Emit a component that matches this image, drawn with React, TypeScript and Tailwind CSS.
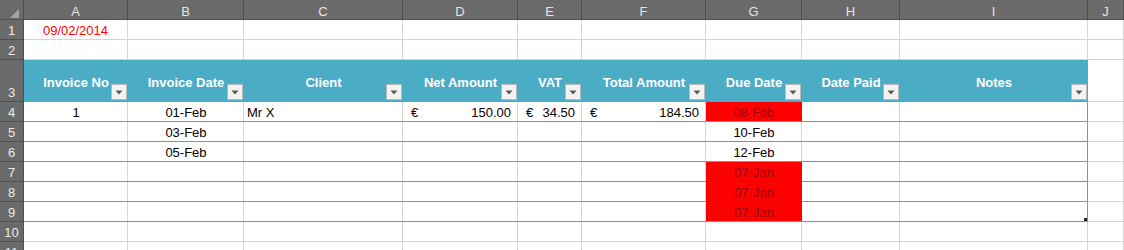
import React from "react";

const letters = ["A", "B", "C", "D", "E", "F", "G", "H", "I", "J"];

const headers = [
  "Invoice No",
  "Invoice Date",
  "Client",
  "Net Amount",
  "VAT",
  "Total Amount",
  "Due Date",
  "Date Paid",
  "Notes",
];

type Body = {
  a?: string;
  b?: string;
  c?: string;
  d?: string;
  e?: string;
  f?: string;
  g?: string;
  red?: boolean;
  redNext?: boolean;
};

const body: Body[] = [
  { a: "1", b: "01-Feb", c: "Mr X", d: "150.00", e: "34.50", f: "184.50", g: "08-Feb", red: true },
  { b: "03-Feb", g: "10-Feb" },
  { b: "05-Feb", g: "12-Feb" },
  { g: "07-Jan", red: true, redNext: true },
  { g: "07-Jan", red: true, redNext: true },
  { g: "07-Jan", red: true },
];

function RowHead({ n }: { n: number | string }) {
  return (
    <div className="flex items-end justify-center bg-[#6a6a6a] border-r border-b border-[#4f4f4f] text-[#ececec] text-[13px] leading-[15px] pb-[1px]">
      {n}
    </div>
  );
}

function FilterBtn() {
  return (
    <div className="absolute right-[1px] bottom-[2px] w-[16px] h-[16px] bg-[#f3f3f3] border border-[#b9b9b9] flex items-center justify-center">
      <svg width="8" height="5" viewBox="0 0 8 5">
        <path d="M0.5 0.5 L7.5 0.5 L4 4.5 Z" fill="#5a5a5a" />
      </svg>
    </div>
  );
}

const grid = "border-r border-b border-[#d4d4d4]";
const tbody = "shadow-[inset_0_-1px_0_#4aa8c0,inset_-1px_0_0_#d4d4d4]";

function Euro({ v }: { v?: string }) {
  if (!v) return <div className={tbody} />;
  return (
    <div className={`${tbody} flex items-end justify-between pl-[8px] pr-[7px] pb-[2px]`}>
      <span>€</span>
      <span>{v}</span>
    </div>
  );
}

export default function App() {
  return (
    <div className="w-[1124px] h-[250px] overflow-hidden bg-white font-['Liberation_Sans',Arial,sans-serif] text-[13px] leading-[15px] text-black">
      <div className="grid grid-cols-[24px_104px_116px_159px_115px_64px_124px_96px_98px_188px_1fr] grid-rows-[20px_20px_20px_42px_repeat(8,20px)]">
        {/* column letters */}
        <div className="relative bg-[#6a6a6a] border-r border-b border-[#4f4f4f]">
          <svg className="absolute left-[10px] top-[9px]" width="9" height="9" viewBox="0 0 9 9">
            <path d="M9 0 L9 9 L0 9 Z" fill="#a3a3a3" />
          </svg>
        </div>
        {letters.map((l) => (
          <div
            key={l}
            className="flex items-center justify-center bg-[#6a6a6a] border-r border-b border-[#4f4f4f] text-[#e6e6e6] text-[13px] pt-[3px]"
          >
            {l}
          </div>
        ))}

        {/* row 1 */}
        <RowHead n={1} />
        <div className={`${grid} flex items-end justify-center pb-[1px] text-[#ff0000]`}>09/02/2014</div>
        {letters.slice(1).map((l) => (
          <div key={l} className={grid} />
        ))}

        {/* row 2 */}
        <RowHead n={2} />
        {letters.map((l) => (
          <div key={l} className={grid} />
        ))}

        {/* row 3 header */}
        <RowHead n={3} />
        {headers.map((h) => (
          <div
            key={h}
            className="relative flex items-center justify-center bg-[#4bacc6] text-white font-bold text-[13px] pt-[3px]"
          >
            {h}
            <FilterBtn />
          </div>
        ))}
        <div className={grid} />

        {/* body rows */}
        {body.map((r, i) => (
          <React.Fragment key={i}>
            <RowHead n={i + 4} />
            <div className={`${tbody} flex items-end justify-center pb-[2px]`}>{r.a}</div>
            <div className={`${tbody} flex items-end justify-center pb-[2px]`}>{r.b}</div>
            <div className={`${tbody} flex items-end pl-[3px] pb-[2px]`}>{r.c}</div>
            <Euro v={r.d} />
            <Euro v={r.e} />
            <Euro v={r.f} />
            {r.red ? (
              <div
                className={`flex items-end justify-center pb-[2px] bg-[#ff0000] text-[#9c0006] ${
                  r.redNext ? "shadow-[inset_0_-1px_0_#e00000]" : "shadow-[inset_0_-1px_0_#4aa8c0]"
                }`}
              >
                {r.g}
              </div>
            ) : (
              <div className={`${tbody} flex items-end justify-center pb-[2px]`}>{r.g}</div>
            )}
            <div className={tbody} />
            <div className="relative shadow-[inset_-1px_-1px_0_#4aa8c0]">
              {i === body.length - 1 && (
                <div className="absolute right-[1px] bottom-[1px] w-[3px] h-[3px] bg-[#222]" />
              )}
            </div>
            <div className={grid} />
          </React.Fragment>
        ))}

        {/* row 10, 11 */}
        {[10, 11].map((n) => (
          <React.Fragment key={n}>
            <RowHead n={n} />
            {letters.map((l) => (
              <div key={l} className={grid} />
            ))}
          </React.Fragment>
        ))}
      </div>
    </div>
  );
}
